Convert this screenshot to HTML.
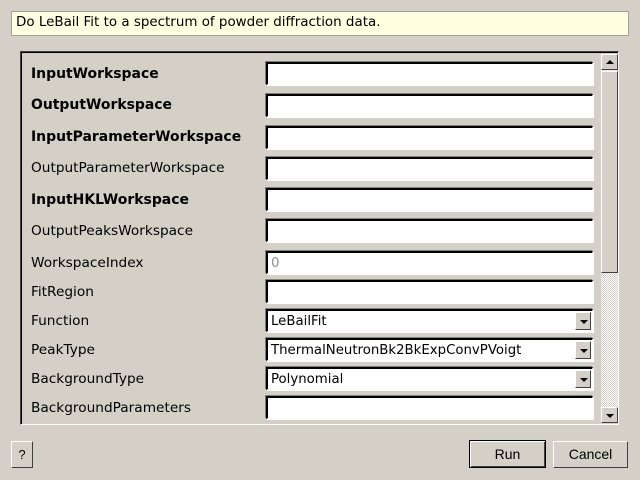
<!DOCTYPE html>
<html><head><meta charset="utf-8"><style>
*{box-sizing:border-box;margin:0;padding:0}
body{width:640px;height:480px;background:#d4d0c8;position:relative;overflow:hidden;font-family:"DejaVu Sans","Liberation Sans",sans-serif;font-size:13px;color:#000}
.a{position:absolute}
.tip{left:11px;top:11px;width:618px;height:25px;background:#ffffe1;border:1px solid #a0a0a0;padding:3px 0 0 4px;font-size:13.45px}
.frame{left:20px;top:51px;width:599px;height:374px;border:1px solid #404040;border-right-color:#fff;border-bottom-color:#fff;box-shadow:inset 1px 1px 0 #000}
.lbl{left:31px;font-size:13.7px;line-height:16px}
.b{font-weight:bold;font-size:13.95px}
.f{left:266px;width:327px;height:23px;background:#fff;border-top:2px solid #000;border-left:2px solid #000;border-right:1px solid #fff;border-bottom:1px solid #fff;box-shadow:1px 1px 0 #fff, -1px -1px 0 #808080;padding:3px 0 0 3px;font-size:13.3px;line-height:16px}
.dd{position:absolute;right:1px;top:1px;width:16px;height:18px;background:#d4d0c8;border:1px solid;border-color:#fff #404040 #404040 #fff}
.dd:after{content:"";position:absolute;left:4px;top:7px;border-left:4px solid transparent;border-right:4px solid transparent;border-top:4px solid #000}
.sb{left:601px;top:54px;width:17px;height:369px;background-color:#e8e6e2;background-image:repeating-conic-gradient(#d4d0c8 0 25%,#fff 0 50%);background-size:2px 2px}
.sbtn{position:absolute;left:0;width:17px;height:16px;background:#d4d0c8;border:1px solid;border-color:#fff #404040 #404040 #fff}
.thumb{position:absolute;left:0;top:17px;width:17px;height:202px;background:#d4d0c8;border:1px solid;border-color:#fff #404040 #404040 #fff}
.btn{background:#d4d0c8;border:1px solid;border-color:#fff #404040 #404040 #fff;text-align:center;font-family:"Liberation Sans",sans-serif;font-size:14px}
</style></head><body>
<div class="a tip">Do LeBail Fit to a spectrum of powder diffraction data.</div>
<div class="a frame"></div>

<div class="a lbl b" style="top:66px">InputWorkspace</div>
<div class="a lbl b" style="top:97px">OutputWorkspace</div>
<div class="a lbl b" style="top:129px">InputParameterWorkspace</div>
<div class="a lbl" style="top:160px">OutputParameterWorkspace</div>
<div class="a lbl b" style="top:192px">InputHKLWorkspace</div>
<div class="a lbl" style="top:223px">OutputPeaksWorkspace</div>
<div class="a lbl" style="top:255px">WorkspaceIndex</div>
<div class="a lbl" style="top:284px">FitRegion</div>
<div class="a lbl" style="top:313px">Function</div>
<div class="a lbl" style="top:342px">PeakType</div>
<div class="a lbl" style="top:371px">BackgroundType</div>
<div class="a lbl" style="top:400px">BackgroundParameters</div>

<div class="a f" style="top:62px"></div>
<div class="a f" style="top:94px"></div>
<div class="a f" style="top:126px"></div>
<div class="a f" style="top:157px"></div>
<div class="a f" style="top:188px"></div>
<div class="a f" style="top:219px"></div>
<div class="a f" style="top:251px;color:#909090">0</div>
<div class="a f" style="top:280px"></div>
<div class="a f" style="top:309px">LeBailFit<div class="dd"></div></div>
<div class="a f" style="top:338px">ThermalNeutronBk2BkExpConvPVoigt<div class="dd"></div></div>
<div class="a f" style="top:367px">Polynomial<div class="dd"></div></div>
<div class="a f" style="top:396px"></div>

<div class="a sb">
 <div class="sbtn" style="top:0"><div style="position:absolute;left:4px;top:5px;border-left:4px solid transparent;border-right:4px solid transparent;border-bottom:4px solid #000"></div></div>
 <div class="thumb"></div>
 <div class="sbtn" style="top:353px"><div style="position:absolute;left:4px;top:6px;border-left:4px solid transparent;border-right:4px solid transparent;border-top:4px solid #000"></div></div>
</div>

<div class="a btn" style="left:11px;top:441px;width:22px;height:27px;line-height:25px;font-size:13px">?</div>
<div class="a btn" style="left:469px;top:440px;width:77px;height:28px;line-height:26px;border:1px solid #000;box-shadow:inset 1px 1px 0 #fff,inset -1px -1px 0 #404040">Run</div>
<div class="a btn" style="left:553px;top:441px;width:75px;height:27px;line-height:25px">Cancel</div>
</body></html>
